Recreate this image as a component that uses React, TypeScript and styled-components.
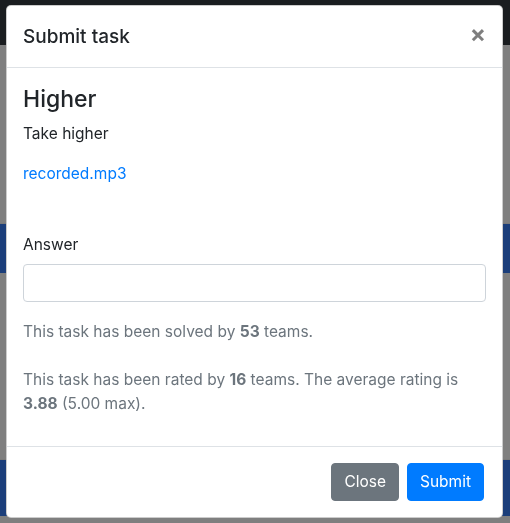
import { createGlobalStyle, styled } from "styled-components";

const GlobalStyle = createGlobalStyle`
  html, body {
    margin: 0;
    padding: 0;
    height: 100%;
  }
  body {
    font-family: Inter, "Liberation Sans", Arial, sans-serif;
    font-size: 16px;
    line-height: 1.5;
    color: #212529;
    background: #ffffff;
  }
`;

const Page = styled.div`
  display: flex;
  flex-direction: column;
  height: 523px;
  overflow: hidden;
`;

const Navbar = styled.div`
  height: 45px;
  background: #343a40;
  flex-shrink: 0;
`;

const PageRow = styled.div<{ $height: number; $active?: boolean }>`
  height: ${(p) => p.$height}px;
  flex-shrink: 0;
  background: ${(p) => (p.$active ? "#377df4" : "#ffffff")};
  border-bottom: 1px solid ${(p) => (p.$active ? "#377df4" : "#f2f2f2")};
`;

const Backdrop = styled.div`
  position: fixed;
  inset: 0;
  background: rgba(0, 0, 0, 0.5);
`;

const Dialog = styled.div`
  position: fixed;
  top: 5px;
  left: 6px;
  width: 497px;
  box-sizing: border-box;
  display: flex;
  flex-direction: column;
  background: #ffffff;
  border: 1px solid rgba(0, 0, 0, 0.2);
  border-radius: 5px;
`;

const Header = styled.div`
  display: flex;
  align-items: flex-start;
  justify-content: space-between;
  padding: 16px 16px 15px;
  border-bottom: 1px solid #dee2e6;
`;

const Title = styled.h5`
  margin: 0;
  font-size: 19px;
  font-weight: 500;
  line-height: 30px;
`;

const CloseX = styled.button`
  border: 0;
  background: transparent;
  padding: 16px;
  margin: -16px -16px -16px auto;
  font-family: inherit;
  font-size: 24px;
  font-weight: 700;
  line-height: 1;
  color: #000;
  opacity: 0.5;
  cursor: pointer;
`;

const Body = styled.div`
  padding: 17px 16px 16px;
`;

const TaskName = styled.h4`
  margin: 0 0 8px;
  font-size: 23px;
  font-weight: 500;
  line-height: 29px;
`;

const Text = styled.p<{ $muted?: boolean }>`
  margin: 0 0 ${(p) => (p.$muted ? 14 : 16)}px;
  font-size: 15.5px;
  line-height: 24px;
  color: ${(p) => (p.$muted ? "#6c757d" : "#212529")};
`;

const FileLink = styled.a`
  color: #007bff;
  text-decoration: none;
`;

const FormGroup = styled.div`
  margin: 47px 0 18px;
`;

const Label = styled.label`
  display: block;
  margin-bottom: 8px;
  font-size: 15.5px;
`;

const Input = styled.input`
  display: block;
  width: 100%;
  height: 38px;
  box-sizing: border-box;
  padding: 6px 12px;
  font: inherit;
  color: #495057;
  border: 1px solid #ced4da;
  border-radius: 4px;
  background: #fff;
`;

const Footer = styled.div`
  display: flex;
  justify-content: flex-end;
  align-items: center;
  padding: 12px 14px 12px 12px;
  border-top: 1px solid #dee2e6;
`;

const Button = styled.button<{ $variant: "primary" | "secondary" }>`
  margin: 4px;
  height: 38px;
  box-sizing: border-box;
  padding: 6px 12px;
  font-family: inherit;
  font-size: 15.5px;
  line-height: 24px;
  color: #fff;
  border: 1px solid ${(p) => (p.$variant === "primary" ? "#007bff" : "#6c757d")};
  background: ${(p) => (p.$variant === "primary" ? "#007bff" : "#6c757d")};
  border-radius: 4px;
  cursor: pointer;
`;

export default function App() {
  return (
    <>
      <GlobalStyle />
      <Page>
        <Navbar />
        <PageRow $height={178} />
        <PageRow $active $height={48} />
        <PageRow $height={186} />
        <PageRow $active $height={55} />
        <PageRow $height={20} />
      </Page>
      <Backdrop />
      <Dialog>
        <Header>
          <Title>Submit task</Title>
          <CloseX aria-label="Close">×</CloseX>
        </Header>
        <Body>
          <TaskName>Higher</TaskName>
          <Text>Take higher</Text>
          <Text>
            <FileLink href="#">recorded.mp3</FileLink>
          </Text>
          <FormGroup>
            <Label htmlFor="answer">Answer</Label>
            <Input id="answer" type="text" />
          </FormGroup>
          <Text $muted>
            This task has been solved by <b>53</b> teams.
            <br />
            <br />
            This task has been rated by <b>16</b> teams. The average rating is <b>3.88</b> (5.00 max).
          </Text>
        </Body>
        <Footer>
          <Button $variant="secondary">Close</Button>
          <Button $variant="primary">Submit</Button>
        </Footer>
      </Dialog>
    </>
  );
}
